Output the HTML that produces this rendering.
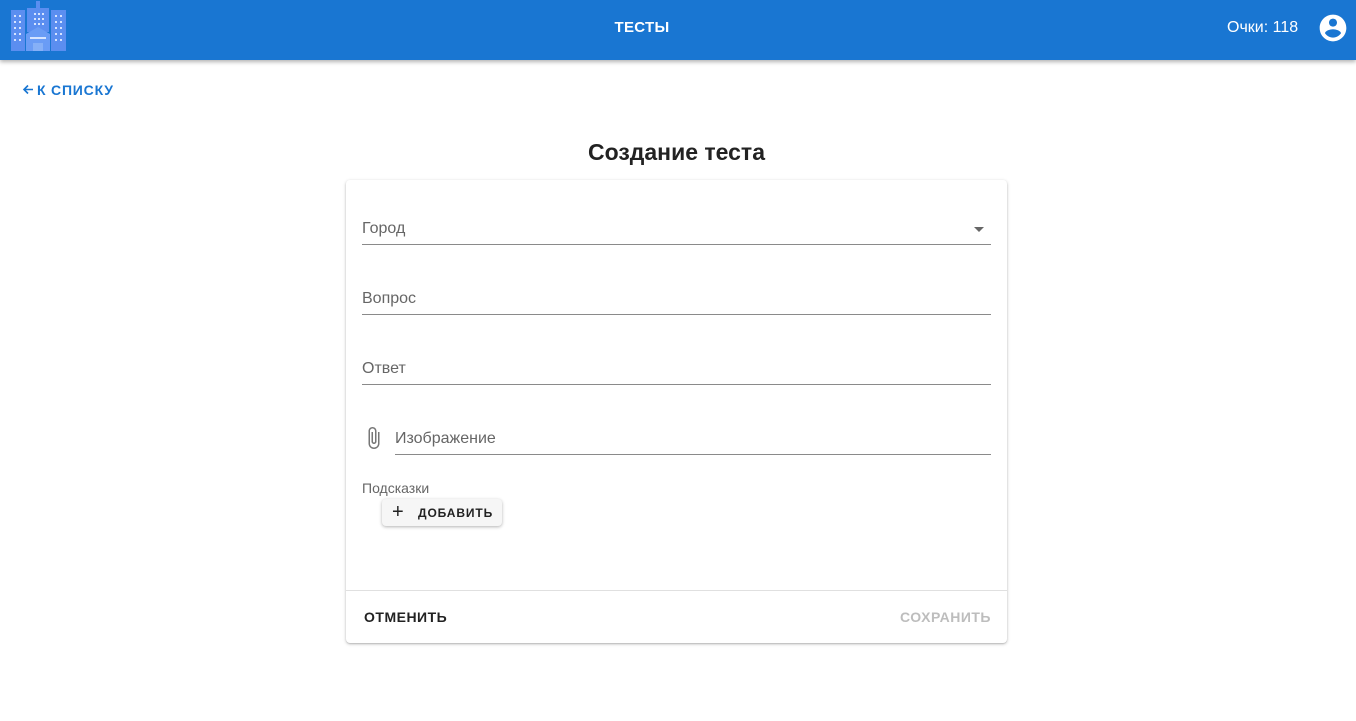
<!DOCTYPE html>
<html><head><meta charset="utf-8"><style>
*{box-sizing:border-box;margin:0;padding:0}
body{width:1356px;height:721px;background:#fff;font-family:"Liberation Sans",sans-serif;position:relative;overflow:hidden}
.hdr{position:absolute;left:0;top:0;width:1356px;height:60px;background:#1976d2;box-shadow:0 2px 4px rgba(0,0,0,.3)}
.abs{position:absolute}
.field{position:absolute;left:362px;width:629px;border-bottom:1px solid #8a8a8a;height:1px}
.lbl{position:absolute;font-size:16px;color:#666}
.card{position:absolute;left:346px;top:180px;width:661px;height:463px;background:#fff;border-radius:4px;box-shadow:0 1px 3px rgba(0,0,0,.25),0 1px 1px rgba(0,0,0,.1)}
</style></head><body>
<div class="hdr">
<svg class="abs" style="left:10px;top:1px" width="56" height="51" viewBox="0 0 56 51">
<rect x="1" y="9" width="14" height="41" fill="#5b8ef0"/>
<rect x="41" y="9" width="15" height="41" fill="#5b8ef0"/>
<rect x="17" y="7" width="22" height="24" fill="#5b8ef0"/>
<rect x="26" y="0" width="4" height="7" fill="#5b8ef0"/>
<polygon points="16,33 28,26 40,33 40,50 16,50" fill="#6a9cf5"/>
<rect x="23" y="42" width="10" height="8" fill="#86b0f7"/>
<g fill="#d6e4ff">
<rect x="4" y="14" width="2" height="2"/><rect x="9" y="14" width="2" height="2"/>
<rect x="4" y="20" width="2" height="2"/><rect x="9" y="20" width="2" height="2"/>
<rect x="4" y="26" width="2" height="2"/><rect x="9" y="26" width="2" height="2"/>
<rect x="4" y="32" width="2" height="2"/><rect x="9" y="32" width="2" height="2"/>
<rect x="4" y="38" width="2" height="2"/><rect x="9" y="38" width="2" height="2"/>
<rect x="45" y="14" width="2" height="2"/><rect x="50" y="14" width="2" height="2"/>
<rect x="45" y="20" width="2" height="2"/><rect x="50" y="20" width="2" height="2"/>
<rect x="45" y="26" width="2" height="2"/><rect x="50" y="26" width="2" height="2"/>
<rect x="45" y="32" width="2" height="2"/><rect x="50" y="32" width="2" height="2"/>
<rect x="45" y="38" width="2" height="2"/><rect x="50" y="38" width="2" height="2"/>
<rect x="24" y="12" width="2" height="2"/><rect x="28" y="12" width="2" height="2"/><rect x="32" y="12" width="2" height="2"/>
<rect x="24" y="17" width="2" height="2"/><rect x="28" y="17" width="2" height="2"/><rect x="32" y="17" width="2" height="2"/>
<rect x="24" y="22" width="2" height="2"/><rect x="28" y="22" width="2" height="2"/><rect x="32" y="22" width="2" height="2"/>
<rect x="20" y="36" width="16" height="2"/>
</g></svg>
<div class="abs" style="left:0;width:1284px;top:19px;text-align:center;color:#fff;font-size:15px;font-weight:bold;letter-spacing:.3px">ТЕСТЫ</div>
<div class="abs" style="left:1227px;top:19px;color:#fff;font-size:16px">Очки: 118</div>
<svg class="abs" style="left:1317px;top:12px" width="32" height="32" viewBox="0 0 24 24"><path fill="#fff" d="M12 2C6.480 2 2 6.48 2 12s4.48 10 10 10 10-4.48 10-10S17.52 2 12 2zm0 3c1.66 0 3 1.34 3 3s-1.34 3-3 3-3-1.34-3-3 1.34-3 3-3zm0 14.2c-2.5 0-4.710-1.28-6-3.22.03-1.99 4-3.08 6-3.08 1.99 0 5.97 1.09 6 3.08-1.29 1.94-3.5 3.22-6 3.22z"/></svg>
</div>
<svg class="abs" style="left:22px;top:83px" width="13" height="13" viewBox="0 0 13 13"><path d="M11 6.5H2M6 2.5L2 6.5l4 4" stroke="#1976d2" stroke-width="1.6" fill="none"/></svg>
<div class="abs" style="left:37px;top:82px;color:#1976d2;font-size:14px;font-weight:bold;letter-spacing:.8px">К СПИСКУ</div>
<div class="abs" style="left:0;width:1353px;top:139px;text-align:center;font-size:23px;font-weight:bold;color:#222">Создание теста</div>
<div class="card"></div>
<div class="lbl" style="left:362px;top:220px">Город</div>
<div class="abs" style="left:974px;top:227px;width:0;height:0;border-left:5px solid transparent;border-right:5px solid transparent;border-top:5px solid #666"></div>
<div class="field" style="top:244px"></div>
<div class="lbl" style="left:362px;top:290px">Вопрос</div>
<div class="field" style="top:314px"></div>
<div class="lbl" style="left:362px;top:360px">Ответ</div>
<div class="field" style="top:384px"></div>
<svg class="abs" style="left:362px;top:426px" width="24" height="24" viewBox="0 0 24 24"><path fill="#777" d="M16.5 6v11.5c0 2.21-1.79 4-4 4s-4-1.790-4-4V5c0-1.38 1.12-2.5 2.5-2.5s2.5 1.12 2.5 2.5v10.5c0 .55-.45 1-1 1s-1-.45-1-1V6H10v9.5c0 1.38 1.12 2.5 2.5 2.5s2.5-1.12 2.5-2.5V5c0-2.21-1.79-4-4-4S7 2.79 7 5v12.5c0 3.04 2.46 5.5 5.5 5.5s5.5-2.46 5.5-5.5V6h-1.5z" transform="translate(-0.5,0)"/></svg>
<div class="lbl" style="left:395px;top:430px">Изображение</div>
<div class="field" style="top:454px;left:395px;width:596px"></div>
<div class="abs" style="left:362px;top:480px;font-size:14px;color:#666">Подсказки</div>
<div class="abs" style="left:382px;top:499px;width:120px;height:27px;border-radius:4px;background:#f6f6f6;box-shadow:0 1px 3px rgba(0,0,0,.3)"></div>
<div class="abs" style="left:392px;top:501px;font-size:20px;color:#222">+</div>
<div class="abs" style="left:418px;top:506px;font-size:12px;font-weight:bold;color:#222;letter-spacing:.9px">ДОБАВИТЬ</div>
<div class="abs" style="left:346px;top:590px;width:661px;height:1px;background:#e0e0e0"></div>
<div class="abs" style="left:364px;top:609px;font-size:14px;font-weight:bold;color:#222;letter-spacing:.5px">ОТМЕНИТЬ</div>
<div class="abs" style="left:800px;width:191px;text-align:right;top:609px;font-size:14px;font-weight:bold;color:#bdbdbd;letter-spacing:.5px">СОХРАНИТЬ</div>
</body></html>
